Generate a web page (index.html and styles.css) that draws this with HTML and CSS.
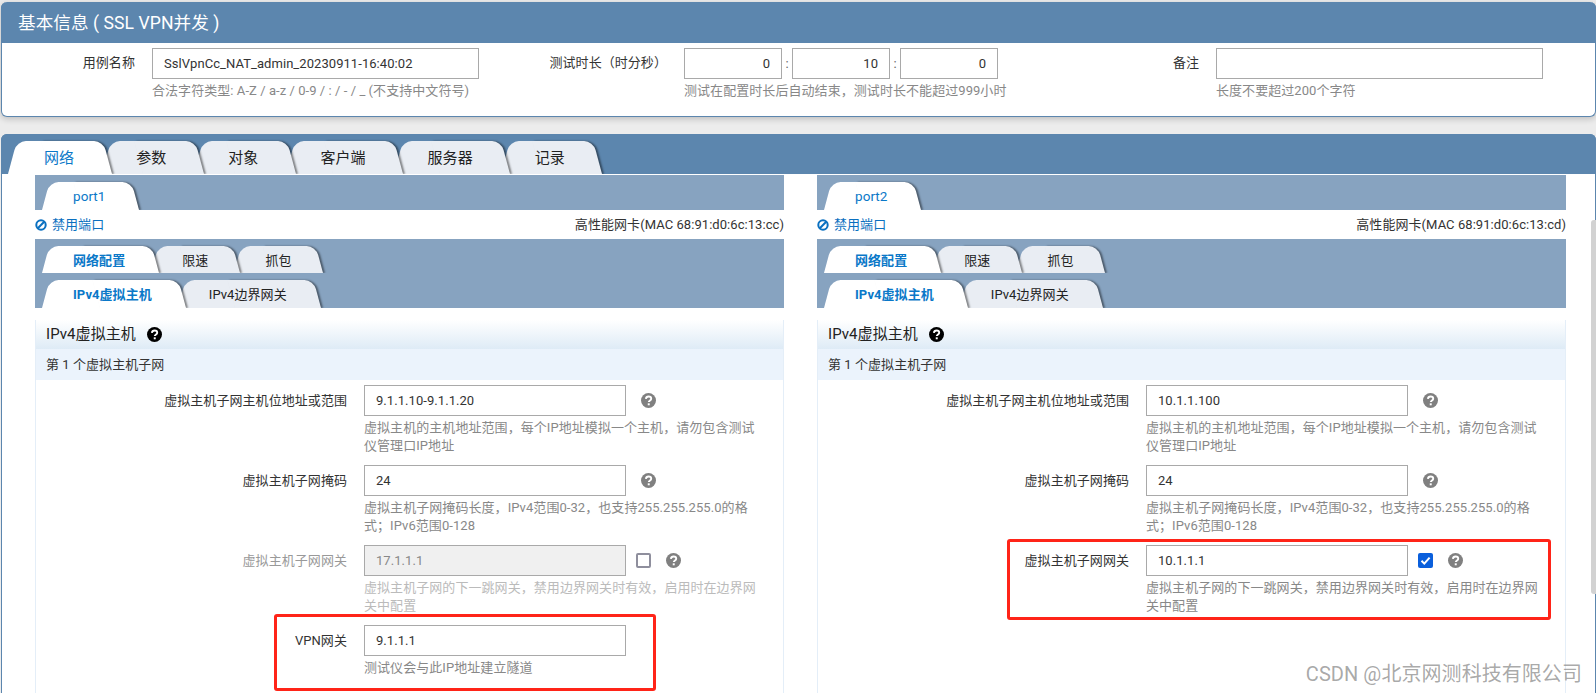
FILE: index.html
```html
<!DOCTYPE html>
<html lang="en">
<head>
    <meta charset="UTF-8">
    <meta name="viewport" content="width=device-width, initial-scale=1.0">
    <title>SSL VPN</title>
    <link rel="stylesheet" href="styles.css">
</head>
<body>

<svg class="defs" width="0" height="0">
    <symbol id="iconHelp" viewBox="0 0 16 16">
        <circle cx="8" cy="8" r="8" fill="currentColor"/>
        <path d="M5.2 6.2c.2-1.6 1.4-2.5 2.9-2.5 1.6 0 2.8 1 2.8 2.3 0 1.1-.7 1.6-1.4 2.1-.7.5-1.2.8-1.2 1.6" fill="none" stroke="#fff" stroke-width="2"/>
        <rect x="7.2" y="11" width="2.1" height="2.1" fill="#fff"/>
    </symbol>
    <symbol id="iconBan" viewBox="0 0 12 12">
        <circle cx="6" cy="6" r="4.7" fill="none" stroke="currentColor" stroke-width="2"/>
        <path d="M2.8 9.2 9.2 2.8" stroke="currentColor" stroke-width="2"/>
    </symbol>
</svg>

<section class="panel panel-basic">
    <h2 class="panel-title">基本信息 ( SSL VPN并发 )</h2>
    <div class="basic-grid">
        <div class="field">
            <label>用例名称</label>
            <input class="text-input" type="text" value="SslVpnCc_NAT_admin_20230911-16:40:02">
            <p class="help">合法字符类型: A-Z / a-z / 0-9 / : / - / _ (不支持中文符号)</p>
        </div>
        <div class="field">
            <label>测试时长（时分秒）</label>
            <div class="time-inputs">
                <input class="text-input num" type="text" value="0">
                <span>:</span>
                <input class="text-input num" type="text" value="10">
                <span>:</span>
                <input class="text-input num" type="text" value="0">
            </div>
            <p class="help">测试在配置时长后自动结束，测试时长不能超过999小时</p>
        </div>
        <div class="field">
            <label>备注</label>
            <input class="text-input" type="text">
            <p class="help">长度不要超过200个字符</p>
        </div>
    </div>
</section>

<section class="panel panel-main">
    <div class="main-head">
        <div class="tabs tabs-main">
            <a class="tab active">网络</a>
            <a class="tab">参数</a>
            <a class="tab">对象</a>
            <a class="tab">客户端</a>
            <a class="tab">服务器</a>
            <a class="tab">记录</a>
        </div>
    </div>

    <div class="ports">
        <div class="port">
            <div class="tray tray-port">
                <div class="tabs tabs-port"><a class="tab active">port1</a></div>
            </div>
            <div class="port-info">
                <a class="ban"><svg class="ban-icon"><use href="#iconBan"/></svg>禁用端口</a>
                <span>高性能网卡(MAC 68:91:d0:6c:13:cc)</span>
            </div>
            <div class="tray tray-sub">
                <div class="tabs tabs-sub">
                    <a class="tab active">网络配置</a>
                    <a class="tab">限速</a>
                    <a class="tab">抓包</a>
                </div>
                <div class="tabs tabs-sub tabs-low">
                    <a class="tab active">IPv4虚拟主机</a>
                    <a class="tab">IPv4边界网关</a>
                </div>
            </div>
            <div class="section">
                <div class="section-head">IPv4虚拟主机 <svg class="help-icon dark"><use href="#iconHelp"/></svg></div>
                <div class="section-sub">第 1 个虚拟主机子网</div>
                <div class="rows">
                    <div class="row">
                        <label>虚拟主机子网主机位地址或范围</label>
                        <input class="text-input" type="text" value="9.1.1.10-9.1.1.20">
                        <div class="extras"><svg class="help-icon"><use href="#iconHelp"/></svg></div>
                        <p class="help">虚拟主机的主机地址范围，每个IP地址模拟一个主机，请勿包含测试仪管理口IP地址</p>
                    </div>
                    <div class="row">
                        <label>虚拟主机子网掩码</label>
                        <input class="text-input" type="text" value="24">
                        <div class="extras"><svg class="help-icon"><use href="#iconHelp"/></svg></div>
                        <p class="help">虚拟主机子网掩码长度，IPv4范围0-32，也支持255.255.255.0的格式；IPv6范围0-128</p>
                    </div>
                    <div class="row row-disabled">
                        <label>虚拟主机子网网关</label>
                        <input class="text-input" type="text" value="17.1.1.1" disabled>
                        <div class="extras extras-check"><span class="check"></span><svg class="help-icon"><use href="#iconHelp"/></svg></div>
                        <p class="help">虚拟主机子网的下一跳网关，禁用边界网关时有效，启用时在边界网关中配置</p>
                    </div>
                    <div class="row">
                        <label>VPN网关</label>
                        <input class="text-input" type="text" value="9.1.1.1">
                        <div class="extras"></div>
                        <p class="help">测试仪会与此IP地址建立隧道</p>
                        <div class="mark mark-vpn"></div>
                    </div>
                </div>
            </div>
        </div>

        <div class="port">
            <div class="tray tray-port">
                <div class="tabs tabs-port"><a class="tab active">port2</a></div>
            </div>
            <div class="port-info">
                <a class="ban"><svg class="ban-icon"><use href="#iconBan"/></svg>禁用端口</a>
                <span>高性能网卡(MAC 68:91:d0:6c:13:cd)</span>
            </div>
            <div class="tray tray-sub">
                <div class="tabs tabs-sub">
                    <a class="tab active">网络配置</a>
                    <a class="tab">限速</a>
                    <a class="tab">抓包</a>
                </div>
                <div class="tabs tabs-sub tabs-low">
                    <a class="tab active">IPv4虚拟主机</a>
                    <a class="tab">IPv4边界网关</a>
                </div>
            </div>
            <div class="section">
                <div class="section-head">IPv4虚拟主机 <svg class="help-icon dark"><use href="#iconHelp"/></svg></div>
                <div class="section-sub">第 1 个虚拟主机子网</div>
                <div class="rows">
                    <div class="row">
                        <label>虚拟主机子网主机位地址或范围</label>
                        <input class="text-input" type="text" value="10.1.1.100">
                        <div class="extras"><svg class="help-icon"><use href="#iconHelp"/></svg></div>
                        <p class="help">虚拟主机的主机地址范围，每个IP地址模拟一个主机，请勿包含测试仪管理口IP地址</p>
                    </div>
                    <div class="row">
                        <label>虚拟主机子网掩码</label>
                        <input class="text-input" type="text" value="24">
                        <div class="extras"><svg class="help-icon"><use href="#iconHelp"/></svg></div>
                        <p class="help">虚拟主机子网掩码长度，IPv4范围0-32，也支持255.255.255.0的格式；IPv6范围0-128</p>
                    </div>
                    <div class="row">
                        <label>虚拟主机子网网关</label>
                        <input class="text-input" type="text" value="10.1.1.1">
                        <div class="extras extras-check">
                            <span class="check on"><svg viewBox="0 0 15 15"><path d="M3.5 7.8 6.3 10.6 11.6 4.6" fill="none" stroke="#fff" stroke-width="2"/></svg></span>
                            <svg class="help-icon"><use href="#iconHelp"/></svg>
                        </div>
                        <p class="help">虚拟主机子网的下一跳网关，禁用边界网关时有效，启用时在边界网关中配置</p>
                        <div class="mark mark-gateway"></div>
                    </div>
                </div>
            </div>
        </div>
    </div>
</section>

<div class="scroll-thumb"></div>
<div class="watermark">CSDN @北京网测科技有限公司</div>

</body>
</html>
```

FILE: styles.css
```css
html,
body {
    height: 100%;
    overflow: hidden;
}

body {
    margin: 0;
    padding-top: 2px;
    box-sizing: border-box;
    background-color: #ececec;
    font-family: Roboto, "Noto Sans CJK SC", sans-serif;
    font-size: 13px;
    line-height: 18px;
    letter-spacing: 0.06px;
    color: #333;
}

.defs {
    position: absolute;
}

.panel {
    margin-left: 1px;
    border: 1px solid #5c86ae;
    background-color: #fff;
}

.panel-basic {
    border-radius: 6px;
    border-top: none;
    padding-bottom: 16px;
    box-shadow: 0 2px 6px rgba(0, 0, 0, 0.2);
    margin-bottom: 17px;
}

.panel-title {
    margin: 0 -1px 5px;
    height: 41px;
    padding-left: 17px;
    border-radius: 6px 6px 0 0;
    background-color: #5c86ae;
    color: #fff;
    font-size: 17.6px;
    font-weight: 400;
    line-height: 42px;
}

.basic-grid {
    display: grid;
    grid-template-columns: 532px 532px 1fr;
}

.field {
    display: grid;
    grid-template-columns: 133px 327px;
    column-gap: 17px;
    align-items: center;
}

.field label,
.row label {
    text-align: right;
}

.field label {
    padding-bottom: 2px;
}

.help {
    margin: 3px 0 0;
    color: #888;
}

.field .help {
    grid-column: 2;
}

.text-input {
    box-sizing: border-box;
    width: 100%;
    height: 31px;
    padding: 0 11px;
    border: 1px solid #a9a9a9;
    border-radius: 0;
    outline: none;
    background-color: #fff;
    color: #333;
    font-family: inherit;
    font-size: 13px;
    letter-spacing: inherit;
}

.text-input:disabled {
    background-color: #f0f0f0;
    color: #888;
}

.time-inputs {
    display: flex;
    align-items: center;
    justify-content: space-between;
    width: 314px;
    color: #666;
}

.time-inputs .num {
    width: 98px;
    text-align: right;
}

.time-inputs span {
    width: 10px;
    text-align: center;
}

.panel-main {
    border-bottom: none;
    border-radius: 6px 6px 0 0;
    min-height: 600px;
}

.main-head {
    margin: -1px -1px 0;
    padding: 7px 0 0 7px;
    border-radius: 6px 6px 0 0;
    background-color: #5c86ae;
}

/* tabs: left and right half are skewed to get the slanted sides */
.tabs {
    display: flex;
}

.tab {
    position: relative;
    display: block;
    clip-path: inset(-10px -10px 0 -10px);
    color: #222;
    text-align: center;
}

.tab::before,
.tab::after {
    content: "";
    position: absolute;
    top: 0;
    bottom: 0;
    width: 60%;
    z-index: -1;
    background-color: #e9edf3;
}

.tab::before {
    left: 0;
    border-radius: 9px 0 0 0;
    transform-origin: bottom left;
    transform: skewX(-15deg);
}

.tab::after {
    right: 0;
    border-radius: 0 9px 0 0;
    transform-origin: bottom right;
    transform: skewX(15deg);
    box-shadow: 2px 0 2px rgba(0, 0, 0, 0.45);
}

.tab.active {
    color: #0a78c8;
}

.tab.active::before,
.tab.active::after {
    background-color: #fff;
}

.tab:nth-child(1) { z-index: 6; }
.tab:nth-child(2) { z-index: 5; }
.tab:nth-child(3) { z-index: 4; }
.tab:nth-child(4) { z-index: 3; }
.tab:nth-child(5) { z-index: 2; }
.tab:nth-child(6) { z-index: 1; }

.tabs-main .tab {
    height: 33px;
    padding: 0 37px 0 34px;
    margin-right: -9px;
    font-size: 15px;
    line-height: 35px;
}

.tabs-main .tab:first-child {
    padding: 0 38px 0 36px;
    margin-right: -10px;
}

.tabs-port .tab {
    height: 28px;
    padding: 0 33px 0 31px;
    font-size: 13.5px;
    line-height: 29px;
}

.tabs-sub .tab {
    height: 27px;
    padding: 0 31px;
    margin-right: -5px;
    line-height: 29px;
}

.tabs-sub .tab.active {
    padding-right: 33px;
    margin-right: -7px;
    font-weight: 700;
}

.tabs-low {
    margin-top: 7px;
}

.tabs-low .tab,
.tabs-low .tab.active {
    height: 28px;
    padding-right: 34px;
    margin-right: -8px;
    line-height: 30px;
}

.ports {
    display: flex;
    gap: 33px;
    padding: 1px 0 0 33px;
}

.port {
    width: 749px;
}

.tray {
    padding: 7px 0 0 7px;
    background-color: #87a3c0;
}

.port-info {
    display: flex;
    justify-content: space-between;
    align-items: center;
    height: 29px;
}

.ban {
    display: flex;
    align-items: center;
    color: #0a70c0;
}

.ban-icon {
    width: 12px;
    height: 12px;
    margin-right: 5px;
}

.section {
    margin-top: 12px;
    border: 1px solid #e4eef8;
    border-top: none;
    border-bottom: none;
    min-height: 380px;
}

.section-head {
    display: flex;
    align-items: center;
    gap: 11px;
    box-sizing: border-box;
    height: 29px;
    padding: 0 0 1px 10px;
    background: linear-gradient(to bottom, #fff, #deebf6);
    color: #222;
    font-size: 15px;
}

.section-sub {
    height: 31px;
    padding-left: 10px;
    background-color: #ebf3fc;
    font-size: 13px;
    line-height: 31px;
}

.rows {
    padding-top: 5px;
}

.row {
    position: relative;
    display: grid;
    grid-template-columns: 311px 262px auto;
    grid-template-rows: 31px auto;
    column-gap: 17px;
    align-items: center;
    height: 80px;
    align-content: start;
}

.row .help {
    grid-column: 2 / 4;
    width: 398px;
    margin-top: 3px;
}

.row-disabled label,
.row-disabled .help {
    color: #bbb;
}

.row-disabled label {
    color: #999;
}

.extras {
    display: flex;
    align-items: center;
    margin-left: -2px;
}

.extras-check {
    margin-left: -7px;
    gap: 15px;
}

.help-icon {
    width: 15px;
    height: 15px;
    color: #808080;
}

.help-icon.dark {
    color: #000;
}

.check {
    box-sizing: border-box;
    width: 15px;
    height: 15px;
    border: 2px solid #8f8f9d;
    border-radius: 2px;
    background-color: #fff;
}

.check.on {
    border: none;
    background-color: #0a5fdc;
}

.check svg {
    display: block;
    width: 15px;
    height: 15px;
}

/* red annotation boxes drawn over the form */
.mark {
    position: absolute;
    box-sizing: border-box;
    border: 3px solid #ff2418;
    border-radius: 3px;
}

.mark-vpn {
    left: 238px;
    width: 382px;
    top: -11px;
    height: 77px;
}

.mark-gateway {
    left: 189px;
    width: 544px;
    top: -6px;
    height: 81px;
}

.scroll-thumb {
    position: absolute;
    top: 220px;
    right: 0;
    width: 5px;
    height: 374px;
    border-radius: 3px 0 0 3px;
    background-color: #d2d2d2;
}

.watermark {
    position: absolute;
    right: 14px;
    top: 662px;
    color: rgba(120, 120, 120, 0.65);
    font-size: 20px;
    line-height: 24px;
}
```
